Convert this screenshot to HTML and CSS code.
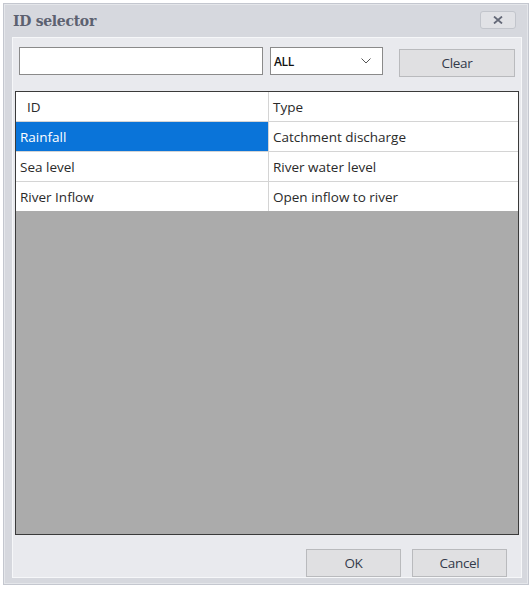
FILE: index.html
```html
<!DOCTYPE html>
<html lang="en">
<head>
    <meta charset="UTF-8">
    <title>ID selector</title>
    <link rel="stylesheet" href="styles.css">
</head>
<body>
    <div class="window">
        <div class="titlebar">
            <span class="title">ID selector</span>
            <button class="close-btn">
                <svg width="10" height="8" viewBox="0 0 10 8">
                    <path d="M1 0.5 L9 7.5 M9 0.5 L1 7.5" stroke="#646978" stroke-width="1.8"/>
                </svg>
            </button>
        </div>

        <div class="content">
            <!-- Filter row -->
            <div class="filter-row">
                <input class="search-box" type="text">
                <div class="type-select">
                    <span>ALL</span>
                    <svg width="10" height="6" viewBox="0 0 10 6">
                        <path d="M0.5 0.5 L5 5 L9.5 0.5" fill="none" stroke="#555" stroke-width="1"/>
                    </svg>
                </div>
                <button class="btn btn-clear">Clear</button>
            </div>

            <!-- Results grid -->
            <div class="grid">
                <div class="grid-row grid-head">
                    <div class="cell cell-id">ID</div>
                    <div class="cell">Type</div>
                </div>
                <div class="grid-row selected">
                    <div class="cell cell-id">Rainfall</div>
                    <div class="cell">Catchment discharge</div>
                </div>
                <div class="grid-row">
                    <div class="cell cell-id">Sea level</div>
                    <div class="cell">River water level</div>
                </div>
                <div class="grid-row">
                    <div class="cell cell-id">River Inflow</div>
                    <div class="cell">Open inflow to river</div>
                </div>
                <div class="grid-empty"></div>
            </div>

            <div class="footer">
                <button class="btn btn-footer">OK</button>
                <button class="btn btn-footer">Cancel</button>
            </div>
        </div>
    </div>
</body>
</html>
```

FILE: styles.css
```css
body {
    margin: 0;
    background: #ffffff;
    font-family: "Open Sans", "Noto Sans", sans-serif;
    font-size: 12px;
    color: #222;
}

.window {
    width: 526px;
    height: 582px;
    margin: 3px 0 0 3px;
    box-sizing: border-box;
    background: #d6d8de;
    border: 1px solid #c4c7cf;
    padding: 0 6px 6px 8px;
    display: flex;
    flex-direction: column;
    box-shadow: inset 0 0 0 1px #e4e6ea;
}

.titlebar {
    height: 33px;
    display: flex;
    align-items: center;
    justify-content: space-between;
    flex-shrink: 0;
}

.title {
    font-family: "DejaVu Serif", "Liberation Serif", serif;
    font-weight: bold;
    font-size: 14px;
    color: #5c6170;
    margin-left: 1px;
    letter-spacing: -0.3px;
}

.close-btn {
    width: 36px;
    height: 18px;
    margin-right: 6px;
    margin-top: -1px;
    border: 1px solid #c2c5cc;
    border-radius: 3px;
    background: #e1e2e6;
    display: flex;
    align-items: center;
    justify-content: center;
    padding: 0;
}

.content {
    flex: 1;
    background: #e9eaee;
    border: 1px solid #f6f7f9;
    display: flex;
    flex-direction: column;
    padding: 9px 2px 0 2px;
    min-height: 0;
}

.filter-row {
    display: flex;
    align-items: flex-start;
    margin-left: 4px;
    height: 44px;
}

.search-box {
    width: 244px;
    height: 28px;
    box-sizing: border-box;
    border: 1px solid #8a8a8a;
    background: #fff;
    margin: 0;
}

.type-select {
    width: 113px;
    height: 28px;
    box-sizing: border-box;
    border: 1px solid #8a8a8a;
    background: #fff;
    margin-left: 7px;
    display: flex;
    align-items: center;
    justify-content: space-between;
    padding: 0 11px 0 3px;
    font-size: 12px;
    font-weight: 600;
    color: #111;
    letter-spacing: -0.4px;
}

.btn {
    font-family: "Open Sans", "Noto Sans", sans-serif;
    font-size: 13.5px;
    color: #333a4a;
    background: #e0e0e2;
    border: 1px solid #b9babd;
    box-sizing: border-box;
    letter-spacing: -0.3px;
}

.btn-clear {
    width: 116px;
    height: 28px;
    margin-left: 16px;
    margin-top: 2px;
}

.grid {
    flex: 1;
    border: 1px solid #3a3a3a;
    display: flex;
    flex-direction: column;
    background: #ababab;
    margin: 0;
}

.grid-row {
    display: flex;
    height: 29px;
    background: #fff;
    border-bottom: 1px solid #d4d4d4;
    flex-shrink: 0;
}

.grid-row:nth-last-child(2) {
    border-bottom: none;
}

.grid-head .cell:first-child {
    padding-left: 11px;
}

.cell {
    display: flex;
    align-items: center;
    box-sizing: border-box;
    padding-left: 4px;
    flex: 1;
    font-size: 13.5px;
    color: #2a2a2a;
    white-space: nowrap;
}

.cell-id {
    flex: 0 0 253px;
    border-right: 1px solid #d4d4d4;
}

.selected .cell-id {
    background: #0a74d9;
    color: #ffffff;
}

.grid-empty {
    flex: 1;
}

.footer {
    height: 42px;
    display: flex;
    justify-content: flex-end;
    align-items: flex-start;
    padding: 14px 12px 0 0;
    gap: 11px;
    box-sizing: border-box;
    flex-shrink: 0;
}

.btn-footer {
    width: 95px;
    height: 28px;
}
```
